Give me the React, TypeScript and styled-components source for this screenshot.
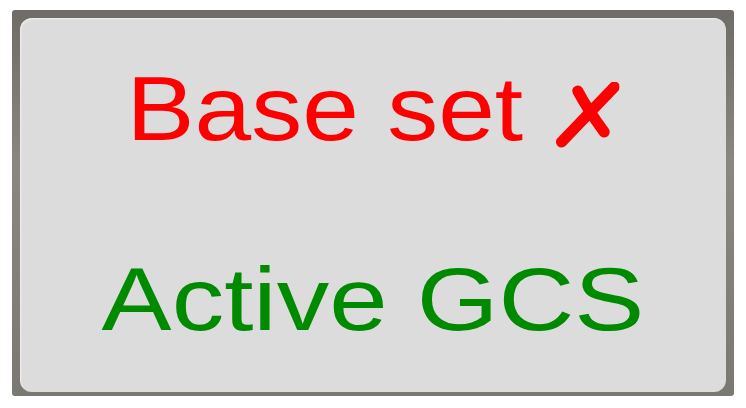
import React from 'react';
import styled, { createGlobalStyle } from 'styled-components';

const GlobalStyle = createGlobalStyle`
    html, body {
        margin: 0;
        padding: 0;
        background: #ffffff;
    }
    body {
        font-family: "Liberation Sans", Arial, sans-serif;
    }
`;

const Frame = styled.div`
    box-sizing: border-box;
    width: 722px;
    height: 386px;
    margin: 10px 0 0 12px;
    padding: 8px 8px 4px 8px;
    border-radius: 3px;
    background: linear-gradient(180deg, #6f6b66 0%, #8a8680 40%, #7b7874 100%);
`;

const Panel = styled.div`
    box-sizing: border-box;
    height: 100%;
    border-radius: 12px;
    background: #dcdcdc;
    box-shadow: inset 1px 1px 2px rgba(255, 255, 255, 0.6);
    display: flex;
    flex-direction: column;
    align-items: center;
    padding-top: 45px;
    gap: 101px;
`;

const Status = styled.div<{ $color: string; $size: number; $stretch: number }>`
    color: ${p => p.$color};
    font-size: ${p => p.$size}px;
    line-height: 1;
    white-space: nowrap;
    transform: scaleX(${p => p.$stretch});
    display: flex;
    align-items: flex-start;
`;

const Cross = styled.svg`
    width: 58px;
    height: 66px;
    margin-left: 28px;
    margin-top: 19px;
    flex-shrink: 0;
`;

// hand-drawn italic ballot X
const CrossMark: React.FC = () => (
    <Cross viewBox="0 0 64 66" preserveAspectRatio="none">
        <path
            d="M2 58 Q4 64 9 62 L62 7 Q63 1 57 2 Z"
            fill="currentColor"
        />
        <path
            d="M7 60 L59 5"
            stroke="currentColor"
            strokeWidth="11"
            strokeLinecap="round"
            fill="none"
        />
        <path
            d="M23 9 Q33 28 49 50"
            stroke="currentColor"
            strokeWidth="11"
            strokeLinecap="round"
            fill="none"
        />
    </Cross>
);

const App: React.FC = () => {
    return (
        <>
            <GlobalStyle />
            <Frame>
                <Panel>
                    <Status $color="#ff0000" $size={91} $stretch={1.12}>
                        Base set
                        <CrossMark />
                    </Status>
                    <Status $color="#008a00" $size={89} $stretch={1.18}>
                        Active GCS
                    </Status>
                </Panel>
            </Frame>
        </>
    );
};

export default App;
